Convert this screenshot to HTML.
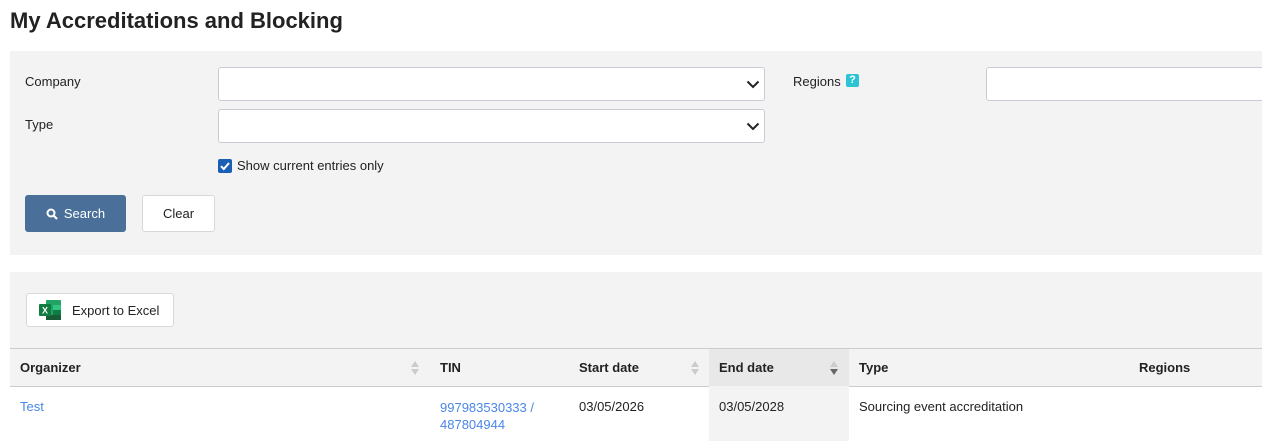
<!DOCTYPE html>
<html><head><meta charset="utf-8"><style>
*{box-sizing:border-box}
body{margin:0;width:1262px;height:441px;overflow:hidden;background:#fff;font-family:"Liberation Sans",sans-serif;font-size:13px;color:#222;position:relative}
.a{position:absolute}
h1{position:absolute;left:10px;top:8px;margin:0;font-size:22px;font-weight:bold;color:#222}
.panel{background:#f3f3f3}
.sel{background:#fff;border:1px solid #c8ccd4;border-radius:3px}
.btn{border:1px solid #d8d8d8;border-radius:3px;background:#fff;display:flex;align-items:center;justify-content:center}
.link{color:#4a86e8}
</style></head><body>
<h1>My Accreditations and Blocking</h1>
<div class="a panel" style="left:10px;top:51px;width:1252px;height:204px"></div>
<div class="a" style="left:25px;top:74px">Company</div>
<div class="a" style="left:25px;top:117px">Type</div>
<div class="a sel" style="left:218px;top:67px;width:547px;height:34px"></div>
<div class="a sel" style="left:218px;top:109px;width:547px;height:34px"></div>
<svg class="a" style="left:746px;top:80px" width="14" height="9" viewBox="0 0 14 9"><path d="M1.5 1.5L7 7L12.5 1.5" fill="none" stroke="#222" stroke-width="2"/></svg>
<svg class="a" style="left:746px;top:122px" width="14" height="9" viewBox="0 0 14 9"><path d="M1.5 1.5L7 7L12.5 1.5" fill="none" stroke="#222" stroke-width="2"/></svg>
<div class="a" style="left:793px;top:74px">Regions</div>
<div class="a" style="left:846px;top:74px;width:13px;height:13px;background:#2ac4d4;border-radius:2px;color:#fff;font-size:11px;font-weight:bold;text-align:center;line-height:13px">?</div>
<div class="a sel" style="left:986px;top:67px;width:290px;height:34px"></div>
<div class="a" style="left:218px;top:159px;width:14px;height:14px;background:#1a5fb4;border-radius:2px"></div>
<svg class="a" style="left:218px;top:159px" width="14" height="14" viewBox="0 0 14 14"><path d="M3 7.2L5.8 10L11 4" fill="none" stroke="#fff" stroke-width="2"/></svg>
<div class="a" style="left:237px;top:158px">Show current entries only</div>
<div class="a btn" style="left:25px;top:195px;width:101px;height:37px;background:#4a7099;border-color:#4a7099;color:#fff">
<svg width="12" height="12" viewBox="0 0 12 12" style="margin-right:6px"><circle cx="5" cy="5" r="3.5" fill="none" stroke="#fff" stroke-width="2"/><path d="M7.5 7.5L11 11" stroke="#fff" stroke-width="2.2"/></svg>Search</div>
<div class="a btn" style="left:142px;top:195px;width:73px;height:37px">Clear</div>
<div class="a panel" style="left:10px;top:272px;width:1252px;height:76px"></div>
<div class="a btn" style="left:26px;top:293px;width:148px;height:34px;justify-content:flex-start;padding-left:12px">
<svg width="23" height="20" viewBox="0 0 23 20" style="margin-right:10px"><rect x="7" y="0" width="15" height="20" rx="1" fill="#21a366"/><rect x="14" y="5" width="8" height="5" fill="#33c481"/><rect x="14" y="10" width="8" height="5" fill="#107c41"/><rect x="7" y="15" width="15" height="5" fill="#185c37"/><rect x="0" y="4" width="12" height="12" rx="1" fill="#107c41"/><text x="6" y="13.5" fill="#fff" font-size="9" font-family="Liberation Sans" text-anchor="middle" font-weight="bold">X</text></svg>Export to Excel</div>
<div class="a" style="left:10px;top:348px;width:1252px;height:39px;background:#f3f3f3;border-top:1px solid #ccc;border-bottom:1px solid #ccc"></div>
<div class="a" style="left:709px;top:349px;width:140px;height:92px;background:#f3f3f3"></div>
<div class="a" style="left:709px;top:349px;width:140px;height:37px;background:#e8e8e8"></div>
<div class="a" style="left:20px;top:360px;font-weight:bold">Organizer</div>
<div class="a" style="left:440px;top:360px;font-weight:bold">TIN</div>
<div class="a" style="left:579px;top:360px;font-weight:bold">Start date</div>
<div class="a" style="left:719px;top:360px;font-weight:bold">End date</div>
<div class="a" style="left:859px;top:360px;font-weight:bold">Type</div>
<div class="a" style="left:1139px;top:360px;font-weight:bold">Regions</div>
<svg class="a" style="left:410px;top:360px" width="10" height="16"><path d="M5 1L9 7H1z" fill="#ccc"/><path d="M5 15L9 9H1z" fill="#ccc"/></svg>
<svg class="a" style="left:690px;top:360px" width="10" height="16"><path d="M5 1L9 7H1z" fill="#ccc"/><path d="M5 15L9 9H1z" fill="#ccc"/></svg>
<svg class="a" style="left:829px;top:360px" width="10" height="16"><path d="M5 1L9 7H1z" fill="#ccc"/><path d="M5 15L9 9H1z" fill="#666"/></svg>
<div class="a link" style="left:20px;top:399px">Test</div>
<div class="a link" style="left:440px;top:399px;line-height:17px">997983530333 /<br>487804944</div>
<div class="a" style="left:579px;top:399px">03/05/2026</div>
<div class="a" style="left:719px;top:399px">03/05/2028</div>
<div class="a" style="left:859px;top:399px">Sourcing event accreditation</div>
</body></html>
